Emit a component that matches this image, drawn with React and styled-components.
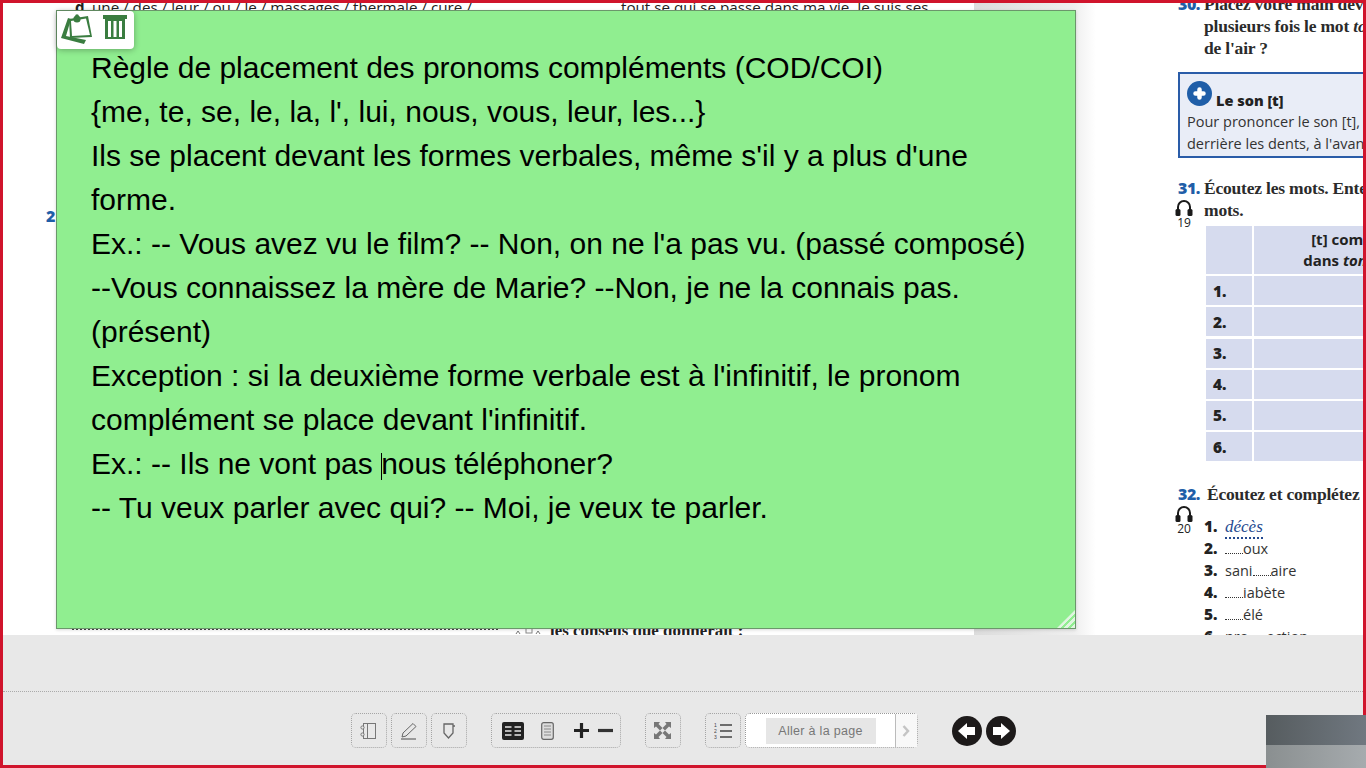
import React from 'react';
import styled, { createGlobalStyle } from 'styled-components';

const GlobalStyle = createGlobalStyle`
  html, body {
    margin: 0;
    padding: 0;
    overflow: hidden;
    background: #fff;
  }
`;

const Frame = styled.div`
  position: relative;
  box-sizing: border-box;
  width: 1366px;
  height: 768px;
  border: 3px solid #d0142c;
  display: flex;
  flex-direction: column;
  font-family: "Liberation Sans", Arial, sans-serif;
`;

const Viewer = styled.div`
  display: flex;
  height: 632px;
  overflow: hidden;
  background: #fff;
`;

const LeftPage = styled.div`
  display: flex;
  flex-direction: column;
  flex: 0 0 971px;
  height: 100%;
`;

const TopRow = styled.div`
  display: flex;
  height: 20px;
  margin-top: -6px;
  font-family: "Open Sans", sans-serif;
  font-size: 15.2px;
  line-height: 20px;
  color: #222;
  white-space: nowrap;
`;

const TopLetter = styled.b`
  margin-left: 72px;
  width: 17px;
`;

const TopColumn = styled.span`
  width: 529px;
`;

const PageMark = styled.div`
  margin: 188px 0 0 43px;
  font-family: "Open Sans", sans-serif;
  font-size: 16px;
  font-weight: 800;
  color: #1f5ea8;
`;

const BottomRow = styled.div`
  margin-top: auto;
  display: flex;
  align-items: flex-start;
  height: 8px;
`;

const DottedRule = styled.div`
  width: 426px;
  margin: 1px 0 0 69px;
  border-top: 2px dotted #444;
`;

const BottomMarks = styled.svg`
  margin: 1px 0 0 17px;
`;

const BottomText = styled.div`
  margin-left: 9px;
  margin-top: -4px;
  font-family: "Liberation Serif", serif;
  font-weight: 700;
  font-size: 16.9px;
  line-height: 16px;
  color: #222;
  white-space: nowrap;
`;

const RightPage = styled.div`
  flex: 1;
  min-width: 0;
  padding: 0 0 0 204px;
  margin-top: -10px;
  background: linear-gradient(to right, #dcdcdc 0, #efefef 100px, #fff 122px);
  background-repeat: no-repeat;
`;

const Exercise = styled.section`
  display: grid;
  grid-template-columns: 26px 1fr;
`;

const NumberColumn = styled.div`
  display: flex;
  flex-direction: column;
  align-items: flex-start;
`;

const ExNumber = styled.div`
  font-family: "Open Sans", sans-serif;
  font-size: 16px;
  font-weight: 800;
  line-height: 22px;
  color: #1f5ea8;
  letter-spacing: -0.5px;
`;

const Track = styled.div`
  display: flex;
  flex-direction: column;
  align-items: center;
  width: 18px;
  margin-left: -3px;
  font-family: "Open Sans", sans-serif;
  font-size: 12px;
  line-height: 11px;
  color: #222;
`;

const Heading = styled.div`
  font-family: "Liberation Serif", serif;
  font-weight: 700;
  font-size: 17.5px;
  line-height: 22px;
  letter-spacing: -0.2px;
  color: #2b2b2b;
  white-space: nowrap;
  margin-left: ${props => props.$indent || 0}px;
`;

const InfoBox = styled.div`
  box-sizing: border-box;
  width: 240px;
  height: 86px;
  margin: 13px 0 19px;
  border: 2px solid #2a5ca8;
  background: #e9edf7;
  padding: 5px 0 0 7px;
  font-family: "Open Sans", sans-serif;
  font-size: 14.5px;
  line-height: 22px;
  color: #333;
  white-space: nowrap;
`;

const InfoTitle = styled.div`
  display: flex;
  align-items: flex-end;
  gap: 4px;
  height: 32px;
  font-weight: 800;
  font-size: 14.5px;
  line-height: 20px;
  color: #222;

  svg {
    align-self: flex-start;
    margin-top: 2px;
  }
`;

const SoundTable = styled.div`
  display: grid;
  grid-template-columns: 46px 190px;
  grid-template-rows: 48px repeat(6, 29px);
  gap: 2.2px 2px;
  margin: 5px 0 22px 2px;
  font-family: "Open Sans", sans-serif;
  color: #222;
`;

const Cell = styled.div`
  display: flex;
  align-items: center;
  background: #d6dbee;
  padding-left: 7px;
  font-size: 15.5px;
  font-weight: 800;
`;

const HeaderCell = styled.div`
  background: #d6dbee;
  padding-top: 3px;
  text-align: center;
  font-size: 15px;
  font-weight: 700;
  line-height: 21px;
  white-space: nowrap;
`;

const WordList = styled.ol`
  list-style: none;
  margin: 10px 0 0;
  padding: 0;
  font-family: "Open Sans", sans-serif;
  font-size: 14.5px;
  line-height: 22px;
  color: #333;
  white-space: nowrap;
`;

const Word = styled.li`
  display: flex;
  height: 22px;
`;

const WordNumber = styled.b`
  width: 21px;
  font-size: 15.5px;
  font-weight: 800;
  color: #222;
`;

const Answer = styled.span`
  margin-top: 2px;
  font-family: "Liberation Serif", serif;
  font-style: italic;
  font-size: 17px;
  color: #24498f;
  border-bottom: 2px dotted #24498f;
  line-height: 19px;
  height: 20px;
`;

const Blank = styled.span`
  display: inline-block;
  width: 18px;
  height: 16px;
  border-bottom: 1px dotted #333;
`;

const Note = styled.div`
  position: absolute;
  top: 7px;
  left: 53px;
  box-sizing: border-box;
  width: 1020px;
  height: 619px;
  padding: 35px 34px 0;
  background: #90ee90;
  border: 1px solid #6b976b;
  box-shadow: 0 1px 3px rgba(0, 0, 0, 0.15);
  font-size: 30px;
  line-height: 44px;
  color: #000;
`;

const NoteLine = styled.div`
  min-height: 44px;
`;

const Caret = styled.span`
  display: inline-block;
  height: 27px;
  margin-right: -1px;
  border-left: 1px solid #000;
  vertical-align: -6px;
`;

const NoteTools = styled.div`
  position: absolute;
  top: 0;
  left: 0;
  box-sizing: border-box;
  display: flex;
  align-items: flex-start;
  justify-content: space-between;
  width: 77px;
  height: 38px;
  padding: 3px 7px 0 4px;
  background: #fff;
  border-radius: 0 4px 4px 4px;
  box-shadow: 0 1px 6px rgba(0, 0, 0, 0.3);
`;

const ResizeGrip = styled.div`
  position: absolute;
  right: 0;
  bottom: 0;
  width: 18px;
  height: 18px;
  background: repeating-linear-gradient(
    135deg,
    transparent 0,
    transparent 2.5px,
    #dff5df 2.5px,
    #dff5df 5px
  );
  clip-path: polygon(100% 0, 100% 100%, 0 100%);
`;

const Toolbar = styled.footer`
  flex: 1;
  min-height: 0;
  background: #e8e8e8;
`;

const ToolbarTop = styled.div`
  height: 56px;
  border-bottom: 1px dotted #aaa;
`;

const Controls = styled.div`
  display: flex;
  justify-content: center;
  align-items: center;
  padding: 21px 0 0;
`;

const ToolGroup = styled.div`
  box-sizing: border-box;
  display: flex;
  align-items: center;
  justify-content: center;
  width: ${props => props.$width || 36}px;
  height: 35px;
  margin-right: ${props => props.$after || 0}px;
  border: 1px dotted #a5a5a5;
  border-radius: 5px;
`;

const ZoomGroup = styled(ToolGroup)`
  justify-content: flex-start;
  padding-left: 10px;
`;

const IconSlot = styled.span`
  display: flex;
  margin-right: ${props => props.$after || 0}px;
`;

const PageJump = styled.div`
  box-sizing: border-box;
  display: flex;
  align-items: center;
  width: 173px;
  height: 35px;
  margin-right: 34px;
  padding-left: 20px;
  background: #fff;
  border: 1px dotted #999;
  border-radius: 5px;
`;

const PageInput = styled.input`
  box-sizing: border-box;
  width: 110px;
  height: 26px;
  padding: 0;
  border: 0;
  outline: 0;
  background: #e6e6e6;
  font-family: "Liberation Sans", Arial, sans-serif;
  font-size: 12.5px;
  letter-spacing: 0.3px;
  text-align: center;

  &::placeholder {
    color: #777;
    opacity: 1;
  }
`;

const NextChevron = styled.div`
  display: flex;
  align-items: center;
  justify-content: center;
  flex: 1;
  height: 100%;
  margin-left: 19px;
  background: #f8f8f8;
  border-left: 1px solid #bbb;
`;

const RoundButton = styled.div`
  display: flex;
  width: 30px;
  height: 30px;
  margin-right: ${props => props.$after || 0}px;
`;

const Thumbnail = styled.div`
  position: absolute;
  right: -3px;
  bottom: -3px;
  width: 100px;
  height: 53px;
  background:
    linear-gradient(to right, #565c5f, #707880) top / 100% 30px no-repeat,
    linear-gradient(to right, #8a8f90, #a6abae) bottom / 100% 23px no-repeat;
`;

const NotesIcon = () => (
  <svg width="32" height="30" viewBox="0 0 32 30">
    <path d="M7 4 L0 24 L23 30 L25 26 L5 22 L10 5 Z" fill="#3a7d40" />
    <path d="M8 5 L27 2 L31 23 L9 24 Z" fill="#3a7d40" />
    <path d="M10 7 L25 4.5 L29 21 L11 22 Z" fill="#fff" />
    <circle cx="16" cy="5" r="3.6" fill="#3a7d40" />
    <circle cx="16" cy="2" r="1.8" fill="#3a7d40" />
  </svg>
);

const TrashIcon = () => (
  <svg width="24" height="26" viewBox="0 0 24 26">
    <rect x="0" y="1" width="24" height="4" fill="#3a7d40" />
    <path d="M2 5 H22 V25 H2 Z M5 7 V23 H8 V7 Z M10.5 7 V23 H13.5 V7 Z M16 7 V23 H19 V7 Z" fill="#3a7d40" fillRule="evenodd" />
  </svg>
);

const PlusCircle = () => (
  <svg width="25" height="25" viewBox="0 0 25 25">
    <circle cx="12.5" cy="12.5" r="12.5" fill="#1f5ea8" />
    <path d="M12.5 8.5 V16.5 M8.5 12.5 H16.5" stroke="#fff" strokeWidth="4.5" strokeLinecap="round" />
  </svg>
);

const Headphones = () => (
  <svg width="18" height="18" viewBox="0 0 18 18">
    <path d="M3 11 V8 A6 6 0 0 1 15 8 V11" fill="none" stroke="#1a1a1a" strokeWidth="2" />
    <rect x="0.5" y="10" width="5" height="7" rx="1.5" fill="#1a1a1a" />
    <rect x="12.5" y="10" width="5" height="7" rx="1.5" fill="#1a1a1a" />
  </svg>
);

const NotebookIcon = () => (
  <svg width="18" height="18" viewBox="0 0 18 18" fill="none" stroke="#777" strokeWidth="1">
    <rect x="3.5" y="1.5" width="12" height="15" />
    <path d="M7.5 1.5 V16.5" />
    <circle cx="2.5" cy="5.5" r="1.6" fill="#e8e8e8" />
    <circle cx="2.5" cy="12.5" r="1.6" fill="#e8e8e8" />
  </svg>
);

const PenIcon = () => (
  <svg width="18" height="18" viewBox="0 0 18 18" fill="none" stroke="#666" strokeWidth="1">
    <path d="M13 1.5 L16 4.5 L6 14 L2 15 L3 11 Z" />
    <path d="M1 17 H16" strokeWidth="1.2" />
  </svg>
);

const BookmarkIcon = () => (
  <svg width="16" height="18" viewBox="0 0 16 18" fill="none" stroke="#666" strokeWidth="1.3">
    <path d="M3 2 H12 V11 L7.5 16 L3 11 Z" />
    <path d="M12 4 H14" />
  </svg>
);

const BookIcon = () => (
  <svg width="22" height="18" viewBox="0 0 22 18">
    <rect width="22" height="18" rx="2" fill="#222" />
    <path d="M3 5 H9.5 M3 9 H9.5 M3 13 H9.5 M12.5 5 H19 M12.5 9 H19 M12.5 13 H19" stroke="#e8e8e8" strokeWidth="1.4" />
  </svg>
);

const PageIcon = () => (
  <svg width="13" height="18" viewBox="0 0 13 18" fill="none">
    <rect x="0.7" y="0.7" width="11.6" height="16.6" rx="2" stroke="#666" strokeWidth="1.2" fill="#ddd" />
    <path d="M3 4 H10 M3 7 H10 M3 10 H10 M3 13 H10" stroke="#888" strokeWidth="1" />
  </svg>
);

const PlusIcon = () => (
  <svg width="15" height="15" viewBox="0 0 15 15">
    <path d="M7.5 0 V15 M0 7.5 H15" stroke="#222" strokeWidth="3.2" />
  </svg>
);

const MinusIcon = () => (
  <svg width="15" height="15" viewBox="0 0 15 15">
    <path d="M0 7.5 H15" stroke="#333" strokeWidth="3.2" />
  </svg>
);

const ExpandIcon = () => (
  <svg width="17" height="17" viewBox="0 0 17 17" fill="#777">
    <path d="M0 0 H6 L4.5 2 L8.5 6 L6 8.5 L2 4.5 L0 6 Z" />
    <path d="M17 0 H11 L12.5 2 L8.5 6 L11 8.5 L15 4.5 L17 6 Z" />
    <path d="M0 17 H6 L4.5 15 L8.5 11 L6 8.5 L2 12.5 L0 11 Z" />
    <path d="M17 17 H11 L12.5 15 L8.5 11 L11 8.5 L15 12.5 L17 11 Z" />
  </svg>
);

const ListIcon = () => (
  <svg width="18" height="16" viewBox="0 0 18 16">
    <path d="M6 2 H18 M6 8 H18 M6 14 H18" stroke="#444" strokeWidth="1.5" />
    <text x="0" y="4" fontSize="5" fill="#444" fontFamily="Liberation Sans">1</text>
    <text x="0" y="10" fontSize="5" fill="#444" fontFamily="Liberation Sans">2</text>
    <text x="0" y="16" fontSize="5" fill="#444" fontFamily="Liberation Sans">3</text>
  </svg>
);

const ChevronIcon = () => (
  <svg width="8" height="12" viewBox="0 0 8 12">
    <path d="M1.5 1 L6 6 L1.5 11" fill="none" stroke="#c4c4c4" strokeWidth="2.5" />
  </svg>
);

const ArrowCircle = ({ flip }) => (
  <svg width="30" height="30" viewBox="0 0 30 30">
    <circle cx="15" cy="15" r="15" fill="#1d1a1a" />
    <path
      d={flip
        ? 'M24 15 L15 7 V11 H7 V19 H15 V23 Z'
        : 'M6 15 L15 7 V11 H23 V19 H15 V23 Z'}
      fill="#fff"
    />
  </svg>
);

const noteLines = [
  'Règle de placement des pronoms compléments (COD/COI)',
  "{me, te, se, le, la, l', lui, nous, vous, leur, les...}",
  "Ils se placent devant les formes verbales, même s'il y a plus d'une forme.",
  "Ex.: -- Vous avez vu le film? -- Non, on ne l'a pas vu. (passé composé)",
  '--Vous connaissez la mère de Marie? --Non, je ne la connais pas. (présent)',
  "Exception : si la deuxième forme verbale est à l'infinitif, le pronom complément se place devant l'infinitif.",
];

const App = () => (
  <>
    <GlobalStyle />
    <Frame>
      <Viewer>
        <LeftPage>
          <TopRow>
            <TopLetter>d</TopLetter>
            <TopColumn>une / des / leur / ou / le / massages / thermale / cure /</TopColumn>
            <span>tout se qui se passe dans ma vie. Je suis ses</span>
          </TopRow>
          <PageMark>2</PageMark>
          <BottomRow>
            <DottedRule />
            <BottomMarks width="26" height="7" viewBox="0 0 26 7">
              <rect x="11" y="0" width="6" height="5" fill="none" stroke="#888" />
              <path d="M1 6 L3 3 L5 6 M21 6 L23 3 L25 6" fill="none" stroke="#777" />
            </BottomMarks>
            <BottomText>les conseils que donnerait :</BottomText>
          </BottomRow>
        </LeftPage>
        <RightPage>
          <Exercise>
            <NumberColumn><ExNumber>30.</ExNumber></NumberColumn>
            <div>
              <Heading>Placez votre main devant</Heading>
              <Heading>plusieurs fois le mot <i>tomate</i></Heading>
              <Heading>de l'air ?</Heading>
            </div>
          </Exercise>
          <InfoBox>
            <InfoTitle><PlusCircle />Le son [t]</InfoTitle>
            <div>Pour prononcer le son [t], placez</div>
            <div>derrière les dents, à l'avant</div>
          </InfoBox>
          <Exercise>
            <NumberColumn>
              <ExNumber>31.</ExNumber>
              <Track><Headphones />19</Track>
            </NumberColumn>
            <div>
              <Heading>Écoutez les mots. Entendez</Heading>
              <Heading>mots.</Heading>
              <SoundTable>
                <HeaderCell />
                <HeaderCell>[t] comme<br />dans <i>tomate</i></HeaderCell>
                {[1, 2, 3, 4, 5, 6].map(n => (
                  <React.Fragment key={n}>
                    <Cell>{n}.</Cell>
                    <Cell />
                  </React.Fragment>
                ))}
              </SoundTable>
            </div>
          </Exercise>
          <Exercise>
            <NumberColumn>
              <ExNumber>32.</ExNumber>
              <Track><Headphones />20</Track>
            </NumberColumn>
            <div>
              <Heading $indent={3}>Écoutez et complétez</Heading>
              <WordList>
                <Word><WordNumber>1.</WordNumber><Answer>décès</Answer></Word>
                <Word><WordNumber>2.</WordNumber><span><Blank />oux</span></Word>
                <Word><WordNumber>3.</WordNumber><span>sani<Blank />aire</span></Word>
                <Word><WordNumber>4.</WordNumber><span><Blank />iabète</span></Word>
                <Word><WordNumber>5.</WordNumber><span><Blank />élé</span></Word>
                <Word><WordNumber>6.</WordNumber><span>pro<Blank />ection</span></Word>
              </WordList>
            </div>
          </Exercise>
        </RightPage>
      </Viewer>
      <Toolbar>
        <ToolbarTop />
        <Controls>
          <ToolGroup $after={4}><NotebookIcon /></ToolGroup>
          <ToolGroup $after={4}><PenIcon /></ToolGroup>
          <ToolGroup $after={24}><BookmarkIcon /></ToolGroup>
          <ZoomGroup $width={130} $after={24}>
            <IconSlot $after={17}><BookIcon /></IconSlot>
            <IconSlot $after={20}><PageIcon /></IconSlot>
            <IconSlot $after={9}><PlusIcon /></IconSlot>
            <IconSlot><MinusIcon /></IconSlot>
          </ZoomGroup>
          <ToolGroup $after={24}><ExpandIcon /></ToolGroup>
          <ToolGroup $after={4}><ListIcon /></ToolGroup>
          <PageJump>
            <PageInput placeholder="Aller à la page" />
            <NextChevron><ChevronIcon /></NextChevron>
          </PageJump>
          <RoundButton $after={4}><ArrowCircle /></RoundButton>
          <RoundButton><ArrowCircle flip /></RoundButton>
        </Controls>
      </Toolbar>
      <Note>
        {noteLines.map(line => <NoteLine key={line}>{line}</NoteLine>)}
        <NoteLine>Ex.: -- Ils ne vont pas <Caret />nous téléphoner?</NoteLine>
        <NoteLine>-- Tu veux parler avec qui? -- Moi, je veux te parler.</NoteLine>
        <NoteTools>
          <NotesIcon />
          <TrashIcon />
        </NoteTools>
        <ResizeGrip />
      </Note>
      <Thumbnail />
    </Frame>
  </>
);

export default App;
